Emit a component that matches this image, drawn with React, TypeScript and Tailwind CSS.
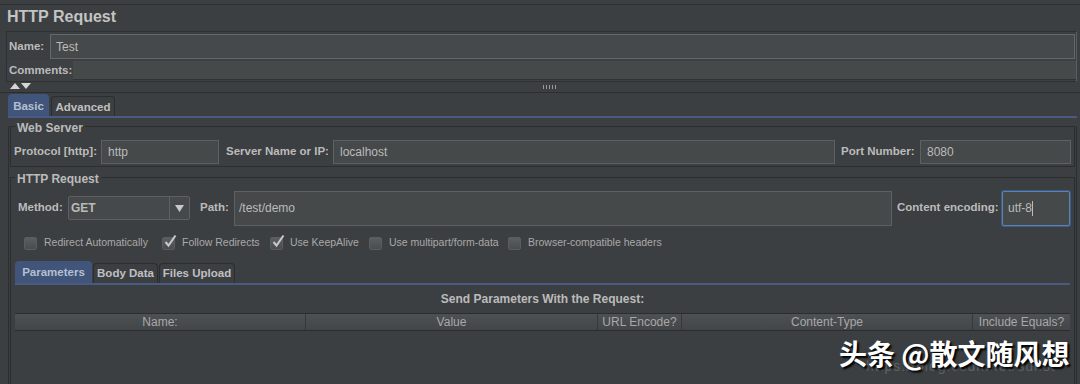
import React from 'react';

const FONT = { fontFamily: '"Liberation Sans", Arial, sans-serif' };

function Field({ value, className = '', focus = false }: { value: string; className?: string; focus?: boolean }) {
  return (
    <div
      className={`shrink-0 flex items-center bg-[#45494a] text-[12px] text-[#bbbbbb] border whitespace-nowrap ${
        focus ? 'border-[#5983b7] rounded-[2px] shadow-[0_0_0_1px_#3d5a80]' : 'border-[#5e6061]'
      } ${className}`}
    >
      {value}
      {focus && <span className="w-px h-[15px] bg-[#bbbbbb]" />}
    </div>
  );
}

function Label({ text, className = '' }: { text: string; className?: string }) {
  return <span className={`shrink-0 whitespace-nowrap text-[11.5px] font-bold text-[#bbbbbb] ${className}`}>{text}</span>;
}

function Check({ label, checked = false, className = '' }: { label: string; checked?: boolean; className?: string }) {
  return (
    <div className={`shrink-0 flex items-center gap-[7px] ${className}`}>
      <div className="relative w-[13px] h-[13px] rounded-[2px] border border-[#5a5d5f] bg-gradient-to-b from-[#5b5e60] to-[#4a4d4f]">
        {checked && (
          <svg className="absolute -top-[4px] left-0" width="15" height="15" viewBox="0 0 15 15">
            <path d="M2.5 8 L5.5 11.5 L12.5 1.5" stroke="#c9c9c9" strokeWidth="2" fill="none" />
          </svg>
        )}
      </div>
      <span className="whitespace-nowrap text-[10.5px] text-[#a9a9a9]">{label}</span>
    </div>
  );
}

function Tab({ label, active = false, className = '' }: { label: string; active?: boolean; className?: string }) {
  return (
    <div
      className={`shrink-0 flex items-center justify-center whitespace-nowrap text-[11.5px] font-bold rounded-t-[4px] border border-b-0 ${
        active ? 'bg-[#41557a] border-[#41557a] text-[#b5bfd0]' : 'bg-[#3c3f41] border-[#2b2d2f] text-[#c0c0c0]'
      } ${className}`}
    >
      {label}
    </div>
  );
}

const COLUMNS = [
  { name: 'Name:', w: 'w-[291px]' },
  { name: 'Value', w: 'w-[292px]' },
  { name: 'URL Encode?', w: 'w-[84px]' },
  { name: 'Content-Type', w: 'w-[291px]' },
  { name: 'Include Equals?', w: 'flex-1' },
];

export default function App() {
  return (
    <div className="relative w-[1080px] h-[384px] overflow-hidden bg-[#3c3f41]" style={FONT}>
      <div className="h-[4px]" />
      <div className="border-t border-[#2e3032] h-[27px] flex items-center px-[7px] pb-[2px]">
        <span className="text-[16px] font-bold text-[#c4c4c4]">HTTP Request</span>
      </div>

      {/* Name / comments */}
      <div className="mx-[6px] w-[1071px] border border-[#2e3032] border-r-[#5a5c5e] bg-[#3c3f41]">
        <div className="flex items-center h-[28px] pl-[2px] pr-[1px] pt-[1px]">
          <Label text="Name:" className="w-[41px]" />
          <Field value="Test" className="flex-1 h-[25px] px-[5px] border-[#656768]" />
        </div>
        <div className="flex items-center h-[21px] pl-[2px] bg-[#3e4143]">
          <Label text="Comments:" className="w-[64px]" />
          <div className="flex-1 h-[19px] bg-[#45494a] border-b border-[#303234]" />
        </div>
      </div>

      {/* splitter */}
      <div className="relative flex items-center h-[8px] pl-[10px]">
        <svg width="22" height="6" viewBox="0 0 22 6">
          <path d="M0 6 L5 0 L10 6 Z" fill="#d5d5d5" />
          <path d="M11 0 L21 0 L16 6 Z" fill="#d5d5d5" />
        </svg>
        <div className="absolute left-[543px] top-[3px] w-[15px] h-[4px] bg-[repeating-linear-gradient(90deg,#9a9a9a_0_1px,transparent_1px_3px)]" />
      </div>
      <div className="h-[3px] border-b border-[#2b2d2f]" />

      {/* Outer tabs */}
      <div className="flex items-end h-[23px] pl-[8px] gap-[2px]">
        <Tab label="Basic" active className="w-[41px] h-[22px] pt-[3px]" />
        <Tab label="Advanced" className="w-[64px] h-[20px] pt-[2px]" />
      </div>
      <div className="ml-[8px] w-[1069px] border-t-[2px] border-[#4a5a80]">
        <div className="border-l border-r border-[#2b2d2f] px-[1px]">
          {/* Web Server */}
          <div className="relative mt-[8px] border border-[#2b2d2f] flex items-center pl-[3px] pt-[13px] pb-[2px]">
            <span className="absolute -top-[8px] left-[4px] px-[2px] bg-[#3c3f41] text-[12px] font-bold text-[#bbbbbb]">Web Server</span>
            <Label text="Protocol [http]:" className="w-[87px]" />
            <Field value="http" className="w-[118px] h-[24px] px-[6px]" />
            <Label text="Server Name or IP:" className="w-[107px] ml-[7px]" />
            <Field value="localhost" className="w-[502px] h-[24px] px-[6px]" />
            <Label text="Port Number:" className="w-[79px] ml-[6px]" />
            <Field value="8080" className="w-[151px] h-[24px] px-[6px]" />
          </div>

          {/* HTTP Request */}
          <div className="relative mt-[10px] border border-[#2b2d2f] pl-[4px] pt-[12px] pb-[4px]">
            <span className="absolute -top-[8px] left-[4px] px-[2px] bg-[#3c3f41] text-[12px] font-bold text-[#bbbbbb]">HTTP Request</span>
            <div className="flex items-center h-[36px] pl-[3px]">
              <Label text="Method:" className="w-[50px]" />
              <div className="shrink-0 flex h-[24px] w-[122px] border border-[#5e6061] rounded-[2px] bg-[#45494a]">
                <span className="flex-1 flex items-center pl-[2px] text-[12px] font-bold text-[#bbbbbb]">GET</span>
                <div className="w-[20px] flex items-center justify-center border-l border-[#5e6061]">
                  <svg width="9" height="7" viewBox="0 0 9 7">
                    <path d="M0 0 L9 0 L4.5 7 Z" fill="#c8c8c8" />
                  </svg>
                </div>
              </div>
              <Label text="Path:" className="w-[34px] ml-[10px]" />
              <Field value="/test/demo" className="w-[658px] h-[35px] px-[4px]" />
              <Label text="Content encoding:" className="w-[105px] ml-[5px]" />
              <Field value="utf-8" className="w-[68px] h-[35px] px-[5px]" focus />
            </div>
            <div className="flex items-center h-[34px] pl-[9px]">
              <Check label="Redirect Automatically" className="w-[138px]" />
              <Check label="Follow Redirects" checked className="w-[108px]" />
              <Check label="Use KeepAlive" checked className="w-[99px]" />
              <Check label="Use multipart/form-data" className="w-[139px]" />
              <Check label="Browser-compatible headers" />
            </div>

            {/* Inner tabs */}
            <div className="flex items-end h-[22px] gap-[1px] mt-[1px]">
              <Tab label="Parameters" active className="w-[77px] h-[22px]" />
              <Tab label="Body Data" className="w-[65px] h-[20px] pt-[1px]" />
              <Tab label="Files Upload" className="w-[76px] h-[20px] pt-[1px]" />
            </div>
            <div className="w-[1055px] border-t-[2px] border-[#4a5a80] h-[120px]">
              <div className="h-[28px] flex items-center justify-center text-[12px] font-bold text-[#bbbbbb]">
                Send Parameters With the Request:
              </div>
              <div className="flex h-[18px] border-t border-b border-[#2b2d2f] bg-gradient-to-b from-[#4e5153] to-[#434648]">
                {COLUMNS.map((c) => (
                  <div
                    key={c.name}
                    className={`${c.w} flex items-center justify-center whitespace-nowrap text-[12px] text-[#a8a8a8] border-r border-[#353739] last:border-r-0`}
                  >
                    {c.name}
                  </div>
                ))}
              </div>
            </div>
          </div>
        </div>
      </div>

      {/* Watermark */}
      <div className="absolute left-[866px] top-[356px] whitespace-nowrap text-[14px] tracking-[1px] text-[#5f6264]">
        https://blog.csdn.net/sunst
      </div>
      <div
        className="absolute left-[839px] top-[332px] whitespace-nowrap text-[28px] font-bold text-white [text-shadow:2px_2px_2px_#000000]"
        style={{ fontFamily: '"Noto Sans CJK SC", sans-serif' }}
      >
        头条 @散文随风想
      </div>
    </div>
  );
}
